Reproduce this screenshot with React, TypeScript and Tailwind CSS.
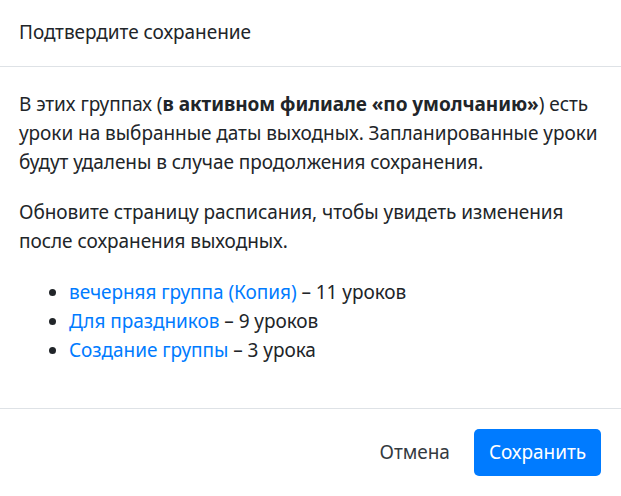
import React from 'react';

const groups = [
  { name: 'вечерняя группа (Копия)', count: '11 уроков' },
  { name: 'Для праздников', count: '9 уроков' },
  { name: 'Создание группы', count: '3 урока' },
];

export default function App() {
  return (
    <div
      className="w-[621px] h-[496px] bg-white text-[#212529] flex flex-col overflow-hidden text-[19px] leading-[29px] tracking-[-0.05px]"
      style={{ fontFamily: '"Noto Sans", "Liberation Sans", sans-serif' }}
    >
      <div className="px-[19px] pt-[18px] pb-[19px] border-b border-[#dee2e6]">
        <h5 className="font-normal">Подтвердите сохранение</h5>
      </div>

      <div className="px-[19px] pt-[23px] flex-1">
        <p className="mb-[21px]">
          В этих группах (<b className="font-bold">в активном филиале «по умолчанию»</b>) есть уроки на выбранные
          даты выходных. Запланированные уроки будут удалены в случае продолжения сохранения.
        </p>
        <p className="mb-[22px]">
          Обновите страницу расписания, чтобы увидеть изменения после сохранения выходных.
        </p>
        <ul className="list-disc pl-[50px]">
          {groups.map((g) => (
            <li key={g.name}>
              <a href="#" className="text-[#007bff]">{g.name}</a> – {g.count}
            </li>
          ))}
        </ul>
      </div>

      <div className="flex items-center justify-end gap-[10px] px-[20px] py-[20px] border-t border-[#dee2e6]">
        <button className="px-[14px] py-[9px] rounded-[5px] text-[#343a40]">Отмена</button>
        <button className="px-[15px] py-[9px] rounded-[5px] bg-[#007bff] text-white">Сохранить</button>
      </div>
    </div>
  );
}
